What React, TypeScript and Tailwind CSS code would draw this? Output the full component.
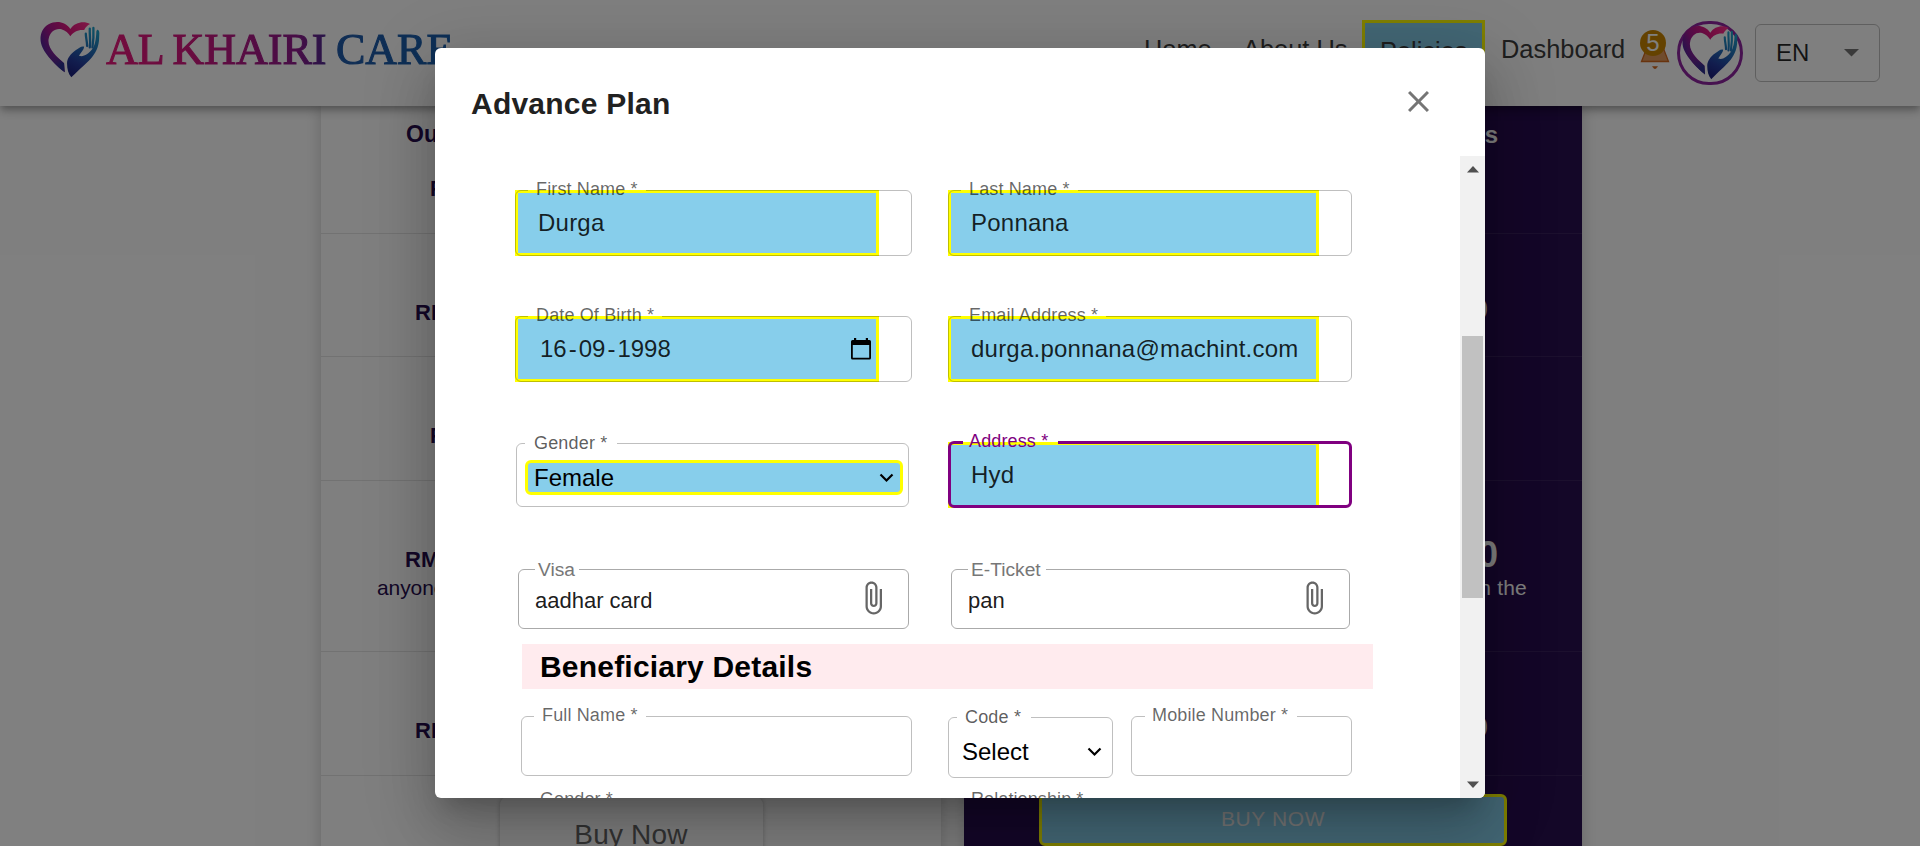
import React from "react";

function HeartLogo({ id, className }: { id: string; className: string }) {
  return (
    <svg viewBox="30 36 182 168" preserveAspectRatio="none" className={className} aria-hidden="true">
      <defs>
        <linearGradient id={id + "-heart"} x1="0" y1="0.6" x2="1" y2="0.1">
          <stop offset="0" stopColor="#3a2a9c" />
          <stop offset="0.3" stopColor="#a3168f" />
          <stop offset="0.65" stopColor="#e0187f" />
          <stop offset="1" stopColor="#ff2f8e" />
        </linearGradient>
        <linearGradient id={id + "-tail"} x1="0" y1="0" x2="0.6" y2="1">
          <stop offset="0.35" stopColor="#a3168f" stopOpacity="0" />
          <stop offset="1" stopColor="#2a3190" />
        </linearGradient>
        <linearGradient id={id + "-hand"} gradientUnits="userSpaceOnUse" x1="190" y1="60" x2="125" y2="190">
          <stop offset="0" stopColor="#1f9fc8" />
          <stop offset="0.45" stopColor="#2267b5" />
          <stop offset="0.75" stopColor="#243a9c" />
          <stop offset="1" stopColor="#1d2280" />
        </linearGradient>
      </defs>
      <path
        fill={`url(#${id}-heart)`}
        d="M122 57C108 36 80 30 56 43C30 58 26 90 38 113C50 138 76 164 105 187L103 160C84 142 52 118 56 88C60 64 78 54 95 58C108 62 116 70 122 79C130 66 146 58 164 60C168 52 174 46 182 42C164 32 136 36 122 57Z"
      />
      <path
        fill={`url(#${id}-tail)`}
        d="M36 70C28 90 34 108 44 122C58 144 80 168 105 187L103 160C84 142 46 118 46 92C44 80 48 66 56 56Z"
      />
      <path
        fill={`url(#${id}-hand)`}
        d="M125 202C116 192 112 178 112 160C112 146 122 132 138 121C148 114 156 107 164 110C163 119 155 126 148 137C160 142 176 134 188 118C197 106 200 88 201 64C203 55 210 59 210 70L209 92C206 120 192 138 178 152C160 170 142 184 125 202Z"
      />
      <g stroke={`url(#${id}-hand)`} strokeWidth="7" strokeLinecap="round" fill="none">
        <path d="M169 71C169 84 173 94 173 108" />
        <path d="M181 56C180 76 184 90 181 112" />
        <path d="M192 54C193 76 192 92 189 112" />
      </g>
    </svg>
  );
}

function Chevron() {
  return (
    <svg width="15" height="10" viewBox="0 0 15 10" fill="none" stroke="#000" strokeWidth="2.2" className="shrink-0" aria-hidden="true">
      <path d="M1.5 1.5L7.5 7.5L13.5 1.5" />
    </svg>
  );
}

function Clip() {
  return (
    <svg width="36" height="36" viewBox="0 0 24 24" fill="#666" className="-mt-[2px] shrink-0" aria-hidden="true">
      <path d="M16.5 6v11.5c0 2.21-1.79 4-4 4s-4-1.79-4-4V5c0-1.38 1.12-2.5 2.5-2.5s2.5 1.12 2.5 2.5v10.5c0 .55-.45 1-1 1s-1-.45-1-1V6H10v9.5c0 1.38 1.12 2.5 2.5 2.5s2.5-1.12 2.5-2.5V5c0-2.21-1.79-4-4-4S7 2.79 7 5v12.5c0 3.04 2.46 5.5 5.5 5.5s5.5-2.46 5.5-5.5V6h-1.5z" />
    </svg>
  );
}

type OutlinedProps = {
  label: string;
  box: string;
  notch: string;
  labelClass?: string;
  focused?: boolean;
  line?: string;
  children?: React.ReactNode;
};

function Outlined({ label, box, notch, labelClass, focused, line, children }: OutlinedProps) {
  return (
    <div className={"relative flex shrink-0 items-center " + box}>
      {children}
      <fieldset
        className={
          "pointer-events-none absolute bottom-0 left-0 right-0 rounded-[6px] " +
          (focused ? "-top-[5px] border-[3px] border-[#800080]" : "-top-[5px] border " + (line || "border-black/25"))
        }
      >
        <legend className={"h-[11px] " + notch} />
      </fieldset>
      <label
        className={
          "absolute whitespace-nowrap leading-[20px] " +
          (labelClass || "-top-[11px] left-[21px] text-[18px] tracking-[0.14px] text-black/60")
        }
      >
        {label}
      </label>
    </div>
  );
}

function Highlighted({ width, children }: { width: string; children: React.ReactNode }) {
  return (
    <div
      className={
        "flex h-full items-center border-[3px] border-[#ffff00] bg-[#87ceeb] pl-[20px] text-[24px] tracking-[0.225px] text-black/85 " +
        width
      }
    >
      {children}
    </div>
  );
}

function Header() {
  return (
    <header className="relative z-10 flex h-[106px] shrink-0 bg-white shadow-[0_3px_6px_-1.5px_rgba(0,0,0,0.2),0_6px_8px_0_rgba(0,0,0,0.14),0_1.5px_15px_0_rgba(0,0,0,0.12)]">
      <div className="flex items-start pl-[40px]">
        <HeartLogo id="brand" className="mt-[22px] h-[56px] w-[60px]" />
        <div className="ml-[6px] mt-[25px] whitespace-nowrap bg-[linear-gradient(90deg,#e8187c_0%,#d0177f_25%,#8e1a8c_55%,#4a2a90_64%,#1f5aa8_67%,#1c62b0_100%)] bg-clip-text font-['Liberation_Serif',serif] text-[44px] leading-[50px] text-transparent [-webkit-text-stroke:1.1px_transparent] [word-spacing:-1.5px]">
          AL KHAIRI CARE
        </div>
      </div>
      <nav className="ml-auto flex items-start text-[25.4px] leading-[30px] text-[#3c3c3c]">
        <span className="mt-[34px] w-[99px]">Home</span>
        <span className="mt-[34px] w-[119px]">About Us</span>
        <span className="mt-[20px] h-[64px] w-[123px] border-[3px] border-[#ffff00] bg-[#87ceeb] pl-[15px] pt-[13px]">
          Policies
        </span>
        <span className="ml-[16px] mt-[34px] w-[139px]">Dashboard</span>
      </nav>
      <div className="relative mt-[30px] h-[42px] w-[30px]">
        <svg width="30" height="42" viewBox="0 0 30 42" aria-hidden="true">
          <path d="M6 20L1.500 31.500H28.500L24 20V10H6Z" fill="#e0985a" stroke="#d0661c" strokeWidth="1.300" />
          <path d="M12.500 36.500H17.500L16 38.500H14Z" fill="#d0661c" stroke="#d0661c" strokeWidth="0.5" />
        </svg>
        <span className="absolute left-0 top-0 flex h-[26px] w-[26px] items-center justify-center rounded-full bg-[#c98500] text-[24px] leading-none text-white">
          5
        </span>
      </div>
      <div className="ml-[7px] mt-[21px] flex h-[64px] w-[66px] items-center justify-center rounded-full border-[3px] border-[#8e24a0]">
        <HeartLogo id="avatar" className="h-[54px] w-[56px]" />
      </div>
      <div className="ml-[12px] mr-[40px] mt-[24px] flex h-[58px] w-[125px] items-center justify-between rounded-[6px] border border-black/25 pl-[20px] pr-[20px] text-[24px] text-black/85">
        EN
        <svg width="15" height="8" viewBox="0 0 15 8" fill="#757575" aria-hidden="true">
          <path d="M0 0H15L7.500 7.500Z" />
        </svg>
      </div>
    </header>
  );
}

function LeftPlan() {
  return (
    <section className="flex h-[760px] w-[620px] shrink-0 flex-col bg-white text-[22px] font-bold leading-[26px] text-[#280f50] shadow-[0_0_15px_rgba(0,0,0,0.2)]">
      <div className="h-[128px] shrink-0 border-b border-black/10 pt-[15px]">
        <p className="pl-[85px] text-[23px]">Outpatient Benefits</p>
        <p className="pl-[109px] pt-[29px]">Free</p>
      </div>
      <div className="h-[123px] shrink-0 border-b border-black/10 pl-[94px] pt-[66px]">RM 500</div>
      <div className="h-[124px] shrink-0 border-b border-black/10 pl-[109px] pt-[66px]">Free</div>
      <div className="h-[171px] shrink-0 border-b border-black/10 pt-[66px]">
        <p className="pl-[84px]">RM 10,000</p>
        <p className="pl-[56px] pt-[2px] text-[21px] font-normal tracking-[-0.1px]">anyone in the family</p>
      </div>
      <div className="h-[124px] shrink-0 border-b border-black/10 pl-[94px] pt-[66px]">RM 500</div>
      <div className="flex justify-center pt-[20px]">
        <div className="h-[70px] w-[263px] rounded-[9px] bg-white pt-[22px] text-center text-[28px] font-normal leading-[34px] tracking-[0.2px] text-[#666] shadow-[0_0_5px_rgba(0,0,0,0.25)]">
          Buy Now
        </div>
      </div>
    </section>
  );
}

function RightPlan() {
  return (
    <section className="flex h-[760px] w-[618px] shrink-0 flex-col bg-[#280f50] text-right text-[30px] font-bold leading-[34px] text-white shadow-[0_0_15px_rgba(0,0,0,0.2)]">
      <div className="h-[128px] shrink-0 border-b border-white/8 pr-[84px] pt-[16px] text-[24px] leading-[26px]">Outpatient Benefits</div>
      <div className="h-[123px] shrink-0 border-b border-white/8 pr-[94px] pt-[58px]">RM 1000</div>
      <div className="h-[124px] shrink-0 border-b border-white/8 pr-[110px] pt-[58px]">Free</div>
      <div className="h-[171px] shrink-0 border-b border-white/8 pt-[53px]">
        <p className="pr-[84px] text-[36px] leading-[42px]">RM 20,000</p>
        <p className="pr-[55px] text-[21px] font-normal leading-[24px] tracking-[0.2px]">anyone in the</p>
      </div>
      <div className="h-[124px] shrink-0 border-b border-white/8 pr-[94px] pt-[58px]">RM 1000</div>
      <div className="flex pl-[75px] pt-[18px]">
        <div className="flex h-[52px] w-[468px] items-center justify-center rounded-[6px] border-[3px] border-[#ffff00] bg-[#87ceeb] pb-[2px] text-[21px] font-normal tracking-[0.6px] text-[#ececec]">
          BUY NOW
        </div>
      </div>
    </section>
  );
}

const fileLabel = "-top-[9px] left-[20px] text-[19.2px] text-[#777]";

function PlanForm() {
  return (
    <div className="flex h-[642px] min-w-0 flex-1 flex-col overflow-hidden pl-[80px] pt-[34px]">
      <div className="flex h-[66px] shrink-0 gap-[36px]">
        <Outlined label="First Name *" box="h-[66px] w-[397px]" notch="ml-[12px] w-[118px]">
          <Highlighted width="w-[364px]">Durga</Highlighted>
        </Outlined>
        <Outlined label="Last Name *" box="h-[66px] w-[404px]" notch="ml-[12px] w-[117px]">
          <Highlighted width="w-[371px]">Ponnana</Highlighted>
        </Outlined>
      </div>

      <div className="mt-[60px] flex h-[66px] shrink-0 gap-[36px]">
        <Outlined label="Date Of Birth *" box="h-[66px] w-[397px]" notch="ml-[12px] w-[134px]">
          <Highlighted width="w-[364px]">
            <span className="flex items-center gap-[2px] pl-[2px] tracking-normal">
              <span>16</span>
              <span>-</span>
              <span>09</span>
              <span>-</span>
              <span>1998</span>
            </span>
            <svg width="20" height="22" viewBox="0 0 20 22" className="ml-auto mr-[5px]" aria-hidden="true">
              <path d="M3 0H5.200V2H14.800V0H17V2H18.500Q20 2 20 3.500V20Q20 21.500 18.500 21.500H1.500Q0 21.500 0 20V3.500Q0 2 1.500 2H3ZM1.800 7V19.700H18.200V7Z" fill="#000" fillRule="evenodd" />
            </svg>
          </Highlighted>
        </Outlined>
        <Outlined label="Email Address *" box="h-[66px] w-[404px]" notch="ml-[12px] w-[145px]">
          <Highlighted width="w-[371px]">durga.ponnana@machint.com</Highlighted>
        </Outlined>
      </div>

      <div className="mt-[60px] flex h-[66px] shrink-0 pl-[1px]">
        <Outlined
          label="Gender *"
          box="mt-[1px] h-[64px] w-[393px] pl-[9px] pt-[5px]"
          notch="ml-[8px] w-[92px]"
          labelClass="-top-[10px] left-[18px] text-[18px] tracking-[0.17px] text-black/65"
        >
          <div className="flex h-[35px] w-[378px] items-center justify-between rounded-[6px] border-[3px] border-[#ffff00] bg-[#87ceeb] pl-[6px] pr-[6px] text-[24px] text-black">
            Female
            <Chevron />
          </div>
        </Outlined>
        <Outlined
          label="Address *"
          box="ml-[39px] h-[66px] w-[404px]"
          notch="ml-[12px] w-[95px]"
          focused
          labelClass="-top-[11px] left-[21px] text-[18px] tracking-[0.14px] text-[#800080]"
        >
          <Highlighted width="w-[371px]">Hyd</Highlighted>
        </Outlined>
      </div>

      <div className="mt-[61px] flex h-[60px] shrink-0 pl-[3px]">
        <Outlined label="Visa" box="h-[60px] w-[391px] pl-[17px] pr-[18px]" notch="ml-[16px] w-[44px]" labelClass={fileLabel} line="border-[#aaa]">
          <span className="mr-auto pt-[2px] text-[22px] text-black/90">aadhar card</span>
          <Clip />
        </Outlined>
        <Outlined label="E-Ticket" box="ml-[42px] h-[60px] w-[399px] pl-[17px] pr-[18px]" notch="ml-[16px] w-[78px]" labelClass={fileLabel} line="border-[#aaa]">
          <span className="mr-auto pt-[2px] text-[22px] text-black/90">pan</span>
          <Clip />
        </Outlined>
      </div>

      <h3 className="ml-[7px] mt-[15px] h-[45px] w-[851px] shrink-0 bg-[#ffebee] pl-[18px] text-[30px] font-bold leading-[45px] tracking-[0.2px] text-black">
        Beneficiary Details
      </h3>

      <div className="mt-[27px] flex h-[62px] shrink-0 items-start pl-[6px]">
        <Outlined label="Full Name *" box="h-[60px] w-[391px]" notch="ml-[12px] w-[112px]" />
        <Outlined
          label="Code *"
          box="ml-[36px] mt-[1px] h-[61px] w-[165px] pl-[14px] pr-[11px] pt-[8px]"
          notch="ml-[8px] w-[74px]"
          labelClass="-top-[10px] left-[17px] text-[18px] tracking-[0.17px] text-black/65"
        >
          <span className="mr-auto text-[24px] text-black">Select</span>
          <Chevron />
        </Outlined>
        <Outlined label="Mobile Number *" box="ml-[18px] h-[60px] w-[221px]" notch="ml-[13px] w-[152px]" />
      </div>

      <div className="mt-[11px] flex shrink-0 pl-[25px] text-[18px] leading-[20px] tracking-[0.1px] text-black/60">
        <span className="w-[431px]">Gender *</span>
        <span>Relationship *</span>
      </div>
    </div>
  );
}

function Modal() {
  return (
    <div className="flex h-[750px] w-[1050px] flex-col overflow-hidden rounded-[6px] bg-white shadow-[0_16px_22px_-10px_rgba(0,0,0,0.2),0_36px_57px_4px_rgba(0,0,0,0.14),0_13px_69px_12px_rgba(0,0,0,0.12)]">
      <div className="flex h-[108px] shrink-0 items-start justify-between pl-[36px] pr-[56px] pt-[38px]">
        <h2 className="text-[30px] font-bold leading-[36px] tracking-[0.225px] text-[#212121]">Advance Plan</h2>
        <svg width="21" height="21" viewBox="5 5 14 14" fill="#757575" className="mt-[5px]" aria-hidden="true">
          <path d="M19 6.410L17.590 5 12 10.590 6.410 5 5 6.410 10.590 12 5 17.590 6.410 19 12 13.410 17.590 19 19 17.590 13.410 12z" />
        </svg>
      </div>
      <div className="flex h-[642px]">
        <PlanForm />
        <div className="flex w-[25px] shrink-0 flex-col items-center bg-[#f1f1f1]">
          <svg width="12" height="7" viewBox="0 0 12 7" fill="#505050" className="mt-[10px]" aria-hidden="true">
            <path d="M0 6.500L6 0L12 6.500Z" />
          </svg>
          <div className="mt-[163px] h-[262px] w-[21px] bg-[#c1c1c1]" />
          <svg width="12" height="7" viewBox="0 0 12 7" fill="#505050" className="mb-[10px] mt-auto" aria-hidden="true">
            <path d="M0 0.500L6 7L12 0.500Z" />
          </svg>
        </div>
      </div>
    </div>
  );
}

export default function App() {
  return (
    <div className="relative h-[846px] w-[1920px] overflow-hidden bg-white font-['Liberation_Sans',Arial,sans-serif]">
      <div className="flex h-full flex-col">
        <Header />
        <main className="flex pl-[321px]">
          <LeftPlan />
          <div className="w-[23px]" />
          <RightPlan />
        </main>
      </div>
      <div className="absolute inset-0 z-20 flex items-center justify-center bg-black/50">
        <Modal />
      </div>
    </div>
  );
}
